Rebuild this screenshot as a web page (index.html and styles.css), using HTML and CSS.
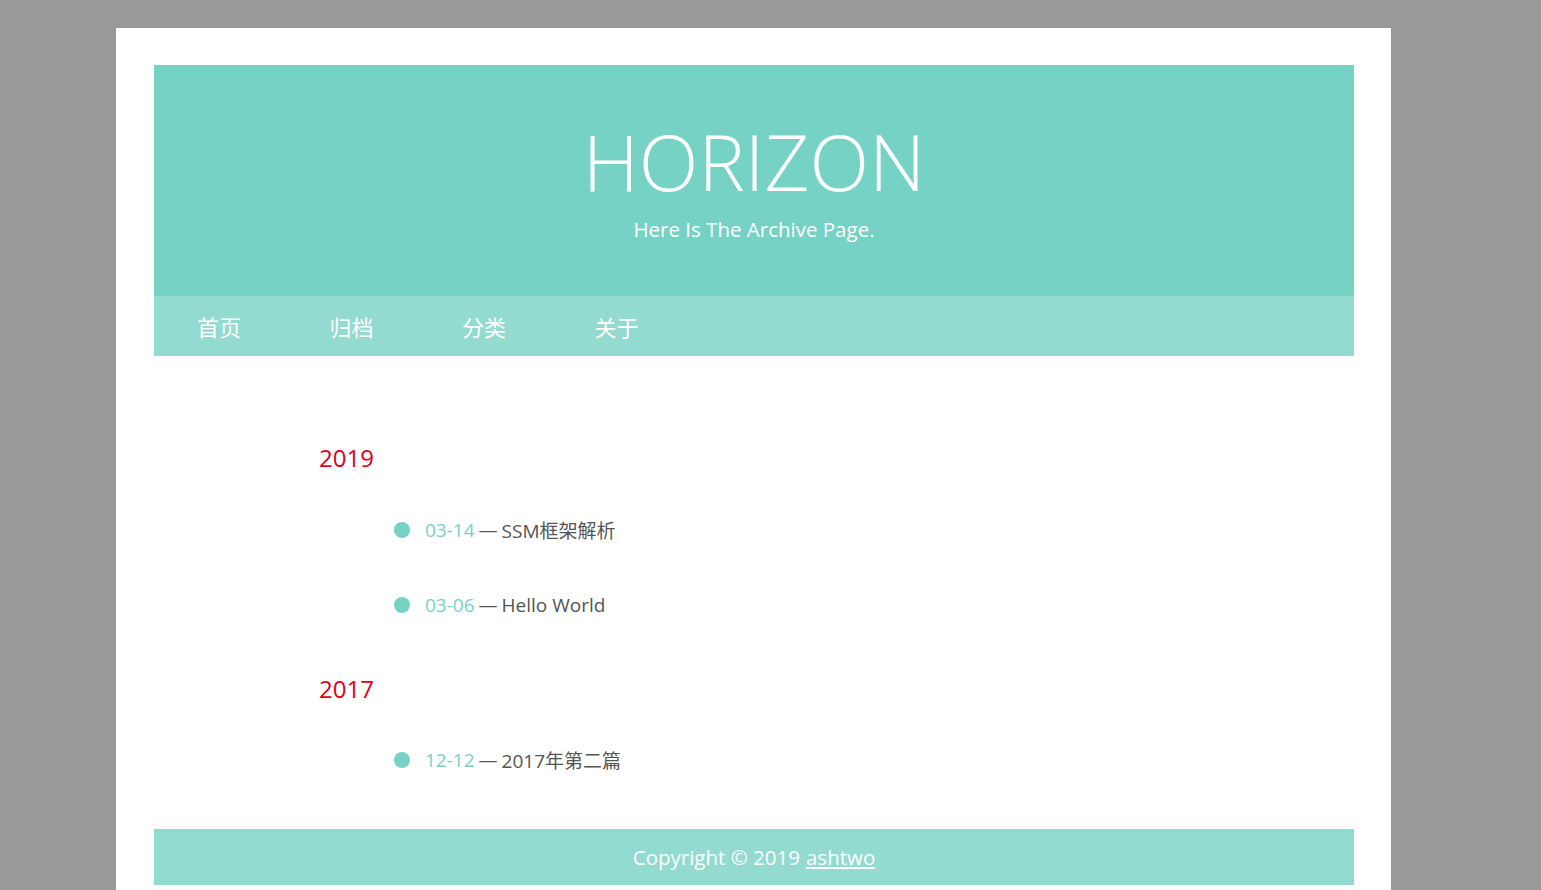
FILE: index.html
```html
<!DOCTYPE html>
<html lang="zh-CN">
<head>
<meta charset="utf-8">
<title>Archive | HORIZON</title>
<link rel="stylesheet" href="styles.css">
</head>
<body>
<div class="page">
  <header class="banner">
    <h1 class="site-title">HORIZON</h1>
    <p class="site-sub">Here Is The Archive Page.</p>
  </header>
  <nav class="nav">
    <a href="#">首页</a>
    <a href="#">归档</a>
    <a href="#">分类</a>
    <a href="#">关于</a>
  </nav>
  <main class="archive">
    <section class="year-group">
      <h2 class="year">2019</h2>
      <ul class="posts">
        <li class="post"><span class="dot"></span><span class="date">03-14</span><span class="dash">—</span><span class="title">SSM框架解析</span></li>
        <li class="post"><span class="dot"></span><span class="date">03-06</span><span class="dash">—</span><span class="title">Hello World</span></li>
      </ul>
    </section>
    <section class="year-group">
      <h2 class="year">2017</h2>
      <ul class="posts">
        <li class="post"><span class="dot"></span><span class="date">12-12</span><span class="dash">—</span><span class="title">2017年第二篇</span></li>
      </ul>
    </section>
  </main>
  <footer class="footer">Copyright © 2019 <a href="#">ashtwo</a></footer>
</div>
</body>
</html>
```
FILE: styles.css
```css
html, body {
  margin: 0;
  padding: 0;
  background: #999999;
  height: 100%;
  overflow: hidden;
}
body {
  font-family: "Open Sans", "Noto Sans CJK SC", sans-serif;
  padding-top: 28px;
}
.page {
  width: 1200px;
  margin-left: 116px;
  background: #ffffff;
  padding: 37px 37px 40px 38px;
}
.banner {
  background: #76d2c5;
  height: 231px;
  text-align: center;
  color: #ffffff;
  padding-top: 56px;
  box-sizing: border-box;
}
.site-title {
  margin: 0;
  font-weight: 300;
  font-size: 78px;
  line-height: 80px;
}
.site-sub {
  margin: 15px 0 0;
  font-size: 20.5px;
  line-height: 26px;
}
.nav {
  background: #93dbd0;
  height: 60px;
  display: flex;
  align-items: center;
  padding-left: 43px;
}
.nav a {
  color: #ffffff;
  text-decoration: none;
  font-size: 22px;
  width: 132.5px;
  font-family: "Noto Sans CJK SC", sans-serif;
  line-height: 30px;
}
.archive {
  display: flex;
  flex-direction: column;
  gap: 53px;
  padding: 86px 0 54px 165px;
}
.year-group {
  display: flex;
  flex-direction: column;
  gap: 41px;
}
.year {
  margin: 0;
  font-weight: 400;
  font-size: 24px;
  line-height: 32px;
  color: #e0001b;
}
.posts {
  list-style: none;
  margin: 0;
  padding: 0 0 0 75px;
  display: flex;
  flex-direction: column;
  gap: 45px;
}
.year-group + .year-group { gap: 40px; }
.post {
  display: flex;
  align-items: center;
  height: 30px;
  font-size: 19px;
}
.dot {
  width: 16px;
  height: 16px;
  border-radius: 50%;
  background: #76d2c5;
  margin-right: 15px;
}
.date {
  color: #76d2c5;
}
.dash {
  color: #555555;
  margin: 0 4px;
}
.title {
  color: #555555;
}
.footer {
  background: #93dbd0;
  height: 56px;
  display: flex;
  align-items: center;
  justify-content: center;
  color: #ffffff;
  font-size: 20.5px;
  gap: 6px;
}
.footer a {
  color: #ffffff;
  text-decoration: underline;
}
```
